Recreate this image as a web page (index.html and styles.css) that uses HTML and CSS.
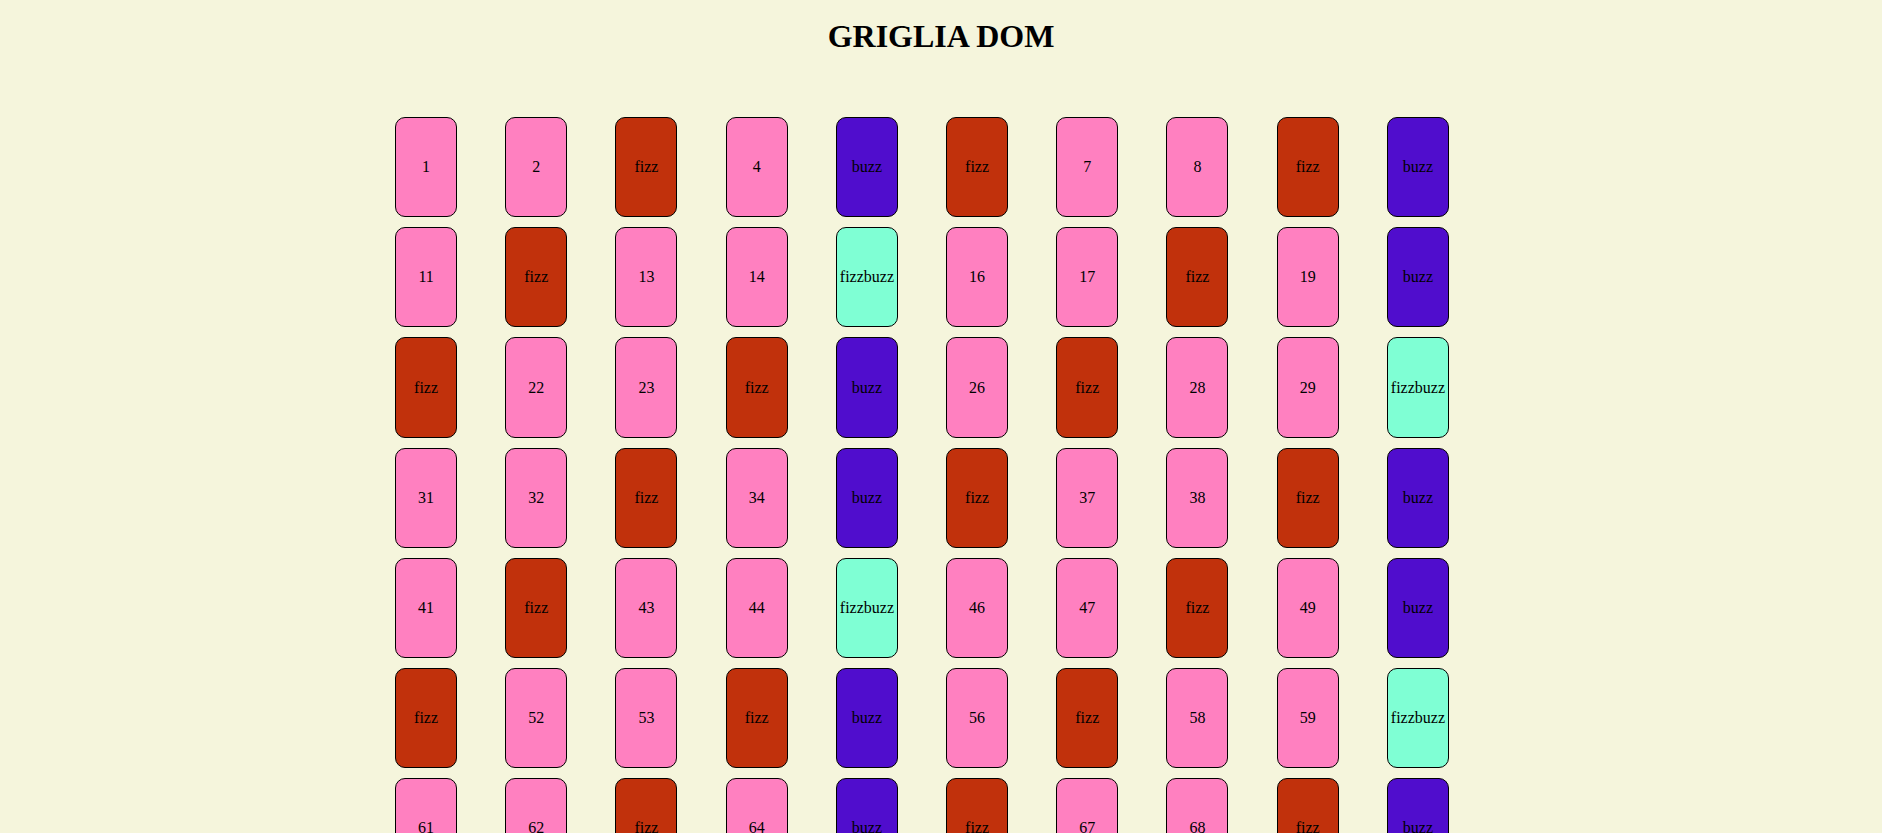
FILE: index.html
```html
<!DOCTYPE html>
<html lang="it">
<head>
  <meta charset="utf-8">
  <meta name="viewport" content="width=device-width, initial-scale=1">
  <title>Griglia DOM</title>
  <link rel="stylesheet" href="styles.css">
</head>
<body>
  <header class="header">
    <h1 class="title">GRIGLIA DOM</h1>
  </header>
  <main class="grid" id="grid"></main>
  <script src="script.js"></script>
</body>
</html>
```
FILE: styles.css
```css
* {
  box-sizing: border-box;
}

body {
  margin: 0;
  background-color: #f5f5dc;
  color: #000;
  font-family: "Liberation Serif", "Times New Roman", serif;
  font-size: 16px;
}

.header {
  padding: 18px 0 57px;
  text-align: center;
}

.title {
  margin: 0;
  font-size: 32px;
  line-height: 37px;
}

.grid {
  display: grid;
  grid-template-columns: repeat(10, 1fr);
  max-width: 1140px;
  margin: 0 auto;
  padding-right: 38px;
}

.cell {
  display: flex;
  justify-content: center;
  aspect-ratio: 1;
  min-width: 0;
  padding: 5px 0;
}

.card {
  display: flex;
  align-items: center;
  justify-content: center;
  width: 62px;
  border: 1px solid #000;
  border-radius: 10px;
  background-color: #ff80c0;
}

.fizz {
  background-color: #c1310c;
}

.buzz {
  background-color: #500dcd;
}

.fizzbuzz {
  background-color: #7fffd4;
}
```
FILE: script.js
```js
const grid = document.getElementById('grid');

for (let i = 1; i <= 100; i++) {
  const word = (i % 3 === 0 ? 'fizz' : '') + (i % 5 === 0 ? 'buzz' : '');
  const cell = document.createElement('div');
  const card = document.createElement('div');
  cell.className = 'cell';
  card.className = 'card';
  if (word) card.classList.add(word);
  card.textContent = word || i;
  cell.append(card);
  grid.append(cell);
}
```
